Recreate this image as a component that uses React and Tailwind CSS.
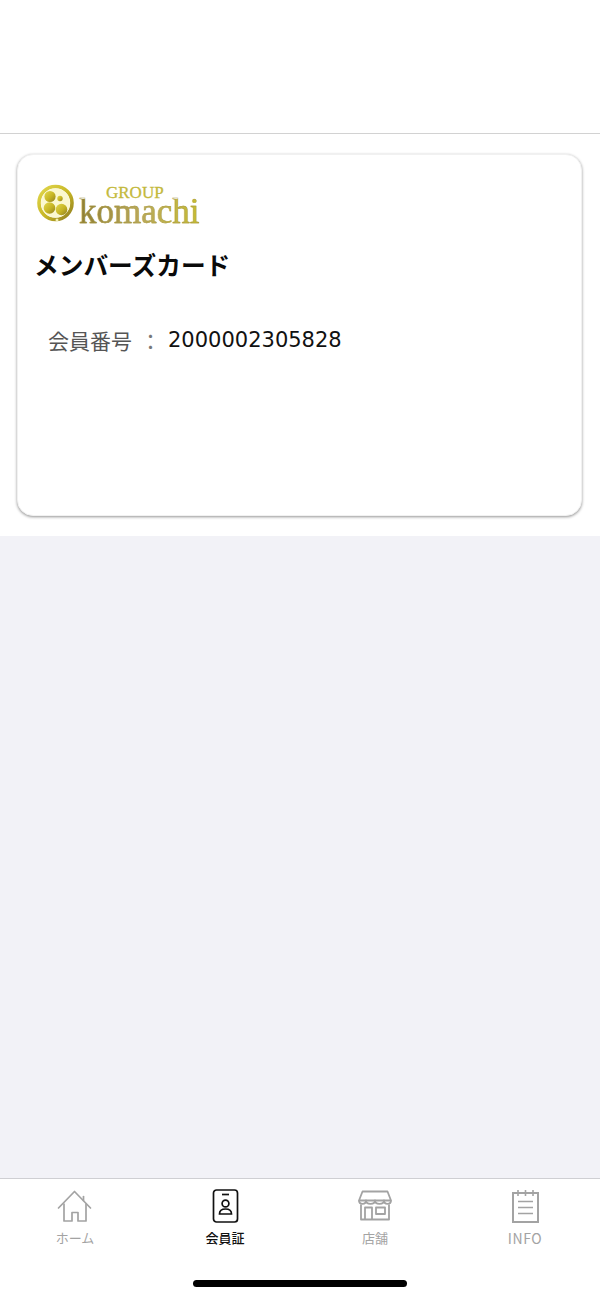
import React from 'react';

const jp = 'font-["DejaVu_Sans","Noto_Sans_CJK_JP",sans-serif]';

const LogoMark = () => (
  <svg width="40" height="42" viewBox="0 0 40 42" fill="none" className="shrink-0">
    <defs>
      <linearGradient id="gold" x1="0" y1="0" x2="1" y2="1">
        <stop offset="0" stopColor="#e2d84e" />
        <stop offset="0.55" stopColor="#c6b524" />
        <stop offset="1" stopColor="#8f7d22" />
      </linearGradient>
    </defs>
    <circle cx="19.5" cy="20" r="16.5" stroke="url(#gold)" strokeWidth="3.6" />
    <circle cx="19.5" cy="20" r="14.5" fill="#fbf8d0" />
    <circle cx="14" cy="13.5" r="5.6" fill="url(#gold)" />
    <circle cx="13.5" cy="25" r="5.8" fill="url(#gold)" />
    <circle cx="25.5" cy="26.5" r="5.8" fill="url(#gold)" />
    <circle cx="24" cy="15.5" r="2.7" fill="url(#gold)" />
    <circle cx="21" cy="37" r="1.5" fill="#f4efb0" />
  </svg>
);

const HomeIcon = () => (
  <svg width="36" height="36" viewBox="0 0 36 36" fill="none" stroke="#a3a3a3" strokeWidth="1.7" strokeLinejoin="round" strokeLinecap="round">
    <path d="M1.5 19 L17.5 2.5 L33.5 19" />
    <path d="M26.5 11.5 V7.5" />
    <path d="M7 15 V32 H15 V23.5 H21 V32 H29 V15" />
  </svg>
);

const CardIcon = () => (
  <svg width="36" height="36" viewBox="0 0 36 36" fill="none" stroke="#111" strokeWidth="1.7">
    <rect x="6.5" y="1" width="24" height="32" rx="3" />
    <path d="M15 5.5 H22" />
    <circle cx="18.5" cy="14.5" r="3.4" />
    <path d="M12.5 25 C12.5 21 15.5 20 18.5 20 C21.5 20 24.5 21 24.5 25 Z" />
  </svg>
);

const ShopIcon = () => (
  <svg width="36" height="36" viewBox="0 0 36 36" fill="none" stroke="#a3a3a3" strokeWidth="1.8" strokeLinejoin="round">
    <path d="M5.5 2.5 H30.5 L34 11.5 H2 Z" />
    <path d="M2 11.5 C2 16 9 16 9 11.5 C9 16 18 16 18 11.5 C18 16 27 16 27 11.5 C27 16 34 16 34 11.5" />
    <path d="M4 15.5 V30.5 H32 V15.5" />
    <path d="M8 30.5 V18.5 H15 V30.5" />
    <rect x="19" y="18.5" width="9" height="6.5" />
  </svg>
);

const NoteIcon = () => (
  <svg width="36" height="36" viewBox="0 0 36 36" fill="none" stroke="#a3a3a3" strokeWidth="2">
    <path d="M6 4 H31 V33 H6 Z" />
    <path d="M11 1 V7 M18.5 1 V7 M26 1 V7" strokeWidth="1.6" />
    <path d="M11 12.5 H26 M11 18.5 H26 M11 24.5 H26" strokeWidth="1.6" />
  </svg>
);

const tabs = [
  { label: 'ホーム', icon: <HomeIcon />, active: false },
  { label: '会員証', icon: <CardIcon />, active: true },
  { label: '店舗', icon: <ShopIcon />, active: false },
  { label: 'INFO', icon: <NoteIcon />, active: false },
];

const App = () => {
  return (
    <div className={`flex flex-col h-[1299px] w-full bg-[#f2f2f7] ${jp}`}>
      {/* header */}
      <div className="h-[134px] bg-white border-b border-[#d2d2d2]" />

      {/* member card */}
      <div className="h-[402px] bg-white pl-[17px] pr-[18px] pt-5">
        <div className="h-[362px] rounded-[16px] bg-white border border-[#f1f1f1] shadow-[0_1px_3px_rgba(0,0,0,0.42)] pl-[17px] pt-[28px]">
          <div className="flex items-center h-[42px] pl-[1px]">
            <LogoMark />
            <div className="flex flex-col ml-[3px] mt-[2px] font-['Liberation_Serif',serif]">
              <div className="ml-[27px] text-[17px] leading-[13px] text-[#c3b93c] [-webkit-text-stroke:0.3px_#c3b93c]">GROUP</div>
              <div className="text-[35px] leading-[26px] bg-gradient-to-r from-[#8f7f33] via-[#b9a95a] to-[#c7bd2d] bg-clip-text text-transparent [-webkit-text-stroke:0.4px_#a8983f]">komachi</div>
            </div>
          </div>
          <h2 className="mt-[21px] -ml-[1px] text-[24.7px] leading-[36px] font-bold text-[#0a0a0a] font-['Noto_Sans_CJK_JP',sans-serif]">メンバーズカード</h2>
          <div className="mt-[42px] ml-[13px] flex items-center text-[21px] leading-[32px]">
            <span className="text-[#555] font-['Noto_Sans_CJK_JP',sans-serif]">会員番号</span>
            <span className="text-[#777] ml-[8px] w-[28px] font-['Noto_Sans_CJK_JP',sans-serif]">：</span>
            <span className="text-[#111]">2000002305828</span>
          </div>
        </div>
      </div>

      <div className="flex-1" />

      {/* tab bar */}
      <div className="h-[121px] bg-white border-t border-[#cfcfd3] relative">
        <div className="grid grid-cols-4 pt-[10px]">
          {tabs.map(tab => (
            <div key={tab.label} className="flex flex-col items-center">
              {tab.icon}
              <span className={`mt-[3px] text-[13px] leading-[20px] font-['Noto_Sans_CJK_JP',sans-serif] ${tab.active ? 'text-[#111] font-medium' : 'text-[#a3a3a3]'} ${tab.label === 'INFO' ? 'text-[14px] tracking-[0.6px]' : ''}`}>
                {tab.label}
              </span>
            </div>
          ))}
        </div>
        <div className="absolute left-[193px] bottom-[12px] w-[214px] h-[7px] rounded-full bg-black" />
      </div>
    </div>
  );
};

export default App;
